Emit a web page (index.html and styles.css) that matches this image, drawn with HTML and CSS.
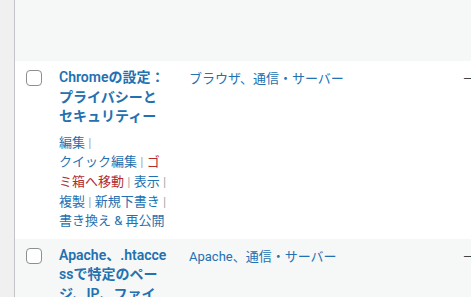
FILE: index.html
```html
<!DOCTYPE html>
<html lang="ja">
<head>
<meta charset="utf-8">
<link rel="stylesheet" href="styles.css">
</head>
<body>
<div class="page">
  <div class="gutter"></div>
  <div class="table">
    <div class="row alt prev"></div>
    <div class="row">
      <div class="cell check"><span class="cb"></span></div>
      <div class="cell title">
        <a class="post-title">Chromeの設定：プライバシーとセキュリティー</a>
        <div class="row-actions"><span><a>編集</a>&nbsp;<span class="sep">|</span> </span><span><button class="inline-btn">クイック編集</button>&nbsp;<span class="sep">|</span> </span><span><a class="trash">ゴミ箱へ移動</a>&nbsp;<span class="sep">|</span> </span><span><a>表示</a>&nbsp;<span class="sep">|</span> </span><span><a>複製</a>&nbsp;<span class="sep">|</span> </span><span><a>新規下書き</a>&nbsp;<span class="sep">|</span> </span><span><a>書き換え &amp; 再公開</a></span></div>
      </div>
      <div class="cell cats"><a>ブラウザ</a>、<a>通信・サーバー</a></div>
      <div class="cell tags">—</div>
    </div>
    <div class="row alt">
      <div class="cell check"><span class="cb"></span></div>
      <div class="cell title">
        <a class="post-title">Apache、.htaccessで特定のページ、IP、ファイル形式へのアクセスを制限する方法</a>
      </div>
      <div class="cell cats"><a>Apache</a>、<a>通信・サーバー</a></div>
      <div class="cell tags">—</div>
    </div>
  </div>
</div>
</body>
</html>
```

FILE: styles.css
```css
html, body {
  margin: 0;
  padding: 0;
  background: #f0f0f1;
  overflow: hidden;
}
body {
  font-family: "Segoe UI", Roboto, "Noto Sans CJK JP", sans-serif;
  font-size: 13px;
  color: #3c434a;
}
.page {
  display: flex;
  height: 297px;
}
.gutter {
  width: 14px;
  flex: none;
  background: #f0f0f1;
  border-right: 1px solid #c3c4c7;
}
.table {
  flex: 1;
  background: #fff;
  display: flex;
  flex-direction: column;
  min-width: 0;
}
.row {
  display: flex;
  background: #fff;
  flex: none;
}
.row.alt {
  background: #f6f7f7;
}
.row.prev {
  height: 61px;
}
.row:last-child {
  flex: 1;
}
.cell {
  padding: 7px 10px 8px;
  flex: none;
}
.check {
  width: 23px;
  padding: 9px 0 0 11px;
}
.cb {
  display: block;
  box-sizing: border-box;
  width: 16px;
  height: 16px;
  border: 1px solid #8c8f94;
  border-radius: 4px;
  background: #fff;
}
.title {
  width: 110px;
  overflow-wrap: break-word;
}
.post-title {
  display: block;
  font-size: 14px;
  font-weight: 600;
  line-height: 19.6px;
  color: #2271b1;
}
.row-actions {
  margin-top: 6px;
  line-height: 19.6px;
  font-size: 13px;
  color: #2271b1;
}
.row-actions .sep {
  color: #a7aaad;
}
.row-actions .trash {
  color: #b32d2e;
}
.inline-btn {
  font: inherit;
  color: #2271b1;
  background: none;
  border: 0;
  padding: 0;
  margin: 0;
  line-height: inherit;
  white-space: nowrap;
}
.cats {
  width: 254px;
  line-height: 19.6px;
  padding-top: 8px;
  color: #2271b1;
}
.cats a {
  color: #2271b1;
}
.tags {
  line-height: 19.6px;
  padding-top: 8px;
  color: #3c434a;
}
```
